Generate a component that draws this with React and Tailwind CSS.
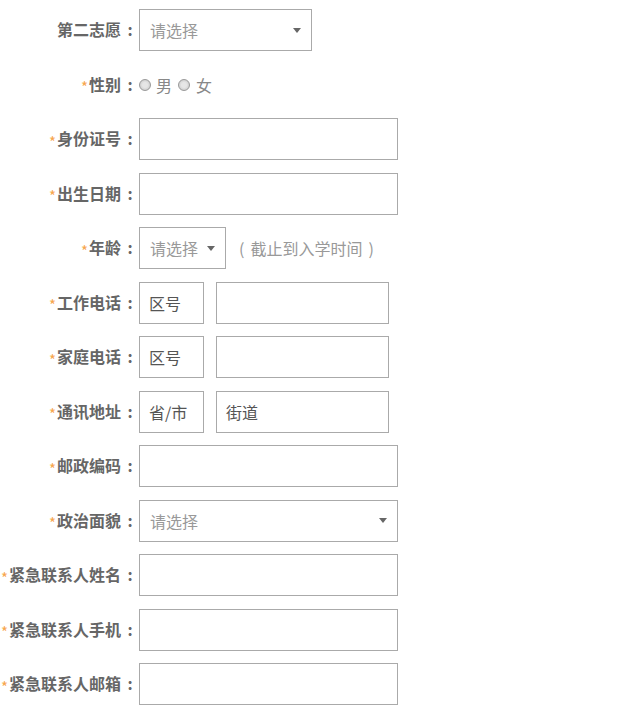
import React from "react"

const font = { fontFamily: '"Microsoft YaHei", "Noto Sans CJK SC", sans-serif' }

function Label({ text, required = true }) {
    return (
        <div className="w-[139px] shrink-0 flex items-center justify-end text-[16px] font-bold text-[#666] leading-none whitespace-nowrap pb-[2px]">
            {required && <span className="inline-block translate-y-[3px] text-[15px] text-[#f7a54d] font-normal mr-[1px]">*</span>}
            <span>{text}</span>
            <span className="w-[18px] text-center">:</span>
        </div>
    )
}

function Box({ w, children }) {
    return (
        <div className={`${w} h-[42px] shrink-0 border border-[#aaa] bg-white flex items-center px-[9px] text-[16px] text-[#555]`}>
            {children}
        </div>
    )
}

function Select({ w }) {
    return (
        <div className={`${w} h-[42px] shrink-0 border border-[#aaa] bg-white flex items-center justify-between pl-[10px] pr-[10px] text-[16px] text-[#999]`}>
            <span>请选择</span>
            <span className="w-0 h-0 border-l-[4px] border-r-[4px] border-t-[5px] border-l-transparent border-r-transparent border-t-[#666]"></span>
        </div>
    )
}

function Radio() {
    return (
        <span className="w-[12px] h-[12px] rounded-full border border-[#999] bg-[radial-gradient(circle,#e6e6e6_35%,#c0c0c0_100%)] inline-block"></span>
    )
}

function Row({ children }) {
    return <div className="flex items-center h-[42px] mb-[12.5px]">{children}</div>
}

export default function App() {
    return (
        <div className="w-[627px] h-[709px] bg-white pt-[9px] overflow-hidden" style={font}>
            <Row>
                <Label text="第二志愿" required={false} />
                <Select w="w-[173px]" />
            </Row>
            <Row>
                <Label text="性别" />
                <div className="flex items-center text-[16px] text-[#888]">
                    <Radio />
                    <span className="ml-[5px]">男</span>
                    <span className="ml-[6px] flex"><Radio /></span>
                    <span className="ml-[6px]">女</span>
                </div>
            </Row>
            <Row>
                <Label text="身份证号" />
                <Box w="w-[259px]" />
            </Row>
            <Row>
                <Label text="出生日期" />
                <Box w="w-[259px]" />
            </Row>
            <Row>
                <Label text="年龄" />
                <Select w="w-[87px]" />
                <div className="ml-[13px] flex items-center text-[16px] text-[#999]">
                    <span>(</span>
                    <span className="ml-[6px]">截止到入学时间</span>
                    <span className="ml-[6px]">)</span>
                </div>
            </Row>
            <Row>
                <Label text="工作电话" />
                <Box w="w-[65px]">区号</Box>
                <div className="ml-[12px]"><Box w="w-[173px]" /></div>
            </Row>
            <Row>
                <Label text="家庭电话" />
                <Box w="w-[65px]">区号</Box>
                <div className="ml-[12px]"><Box w="w-[173px]" /></div>
            </Row>
            <Row>
                <Label text="通讯地址" />
                <Box w="w-[65px]">省/市</Box>
                <div className="ml-[12px]"><Box w="w-[173px]">街道</Box></div>
            </Row>
            <Row>
                <Label text="邮政编码" />
                <Box w="w-[259px]" />
            </Row>
            <Row>
                <Label text="政治面貌" />
                <Select w="w-[259px]" />
            </Row>
            <Row>
                <Label text="紧急联系人姓名" />
                <Box w="w-[259px]" />
            </Row>
            <Row>
                <Label text="紧急联系人手机" />
                <Box w="w-[259px]" />
            </Row>
            <Row>
                <Label text="紧急联系人邮箱" />
                <Box w="w-[259px]" />
            </Row>
        </div>
    )
}
